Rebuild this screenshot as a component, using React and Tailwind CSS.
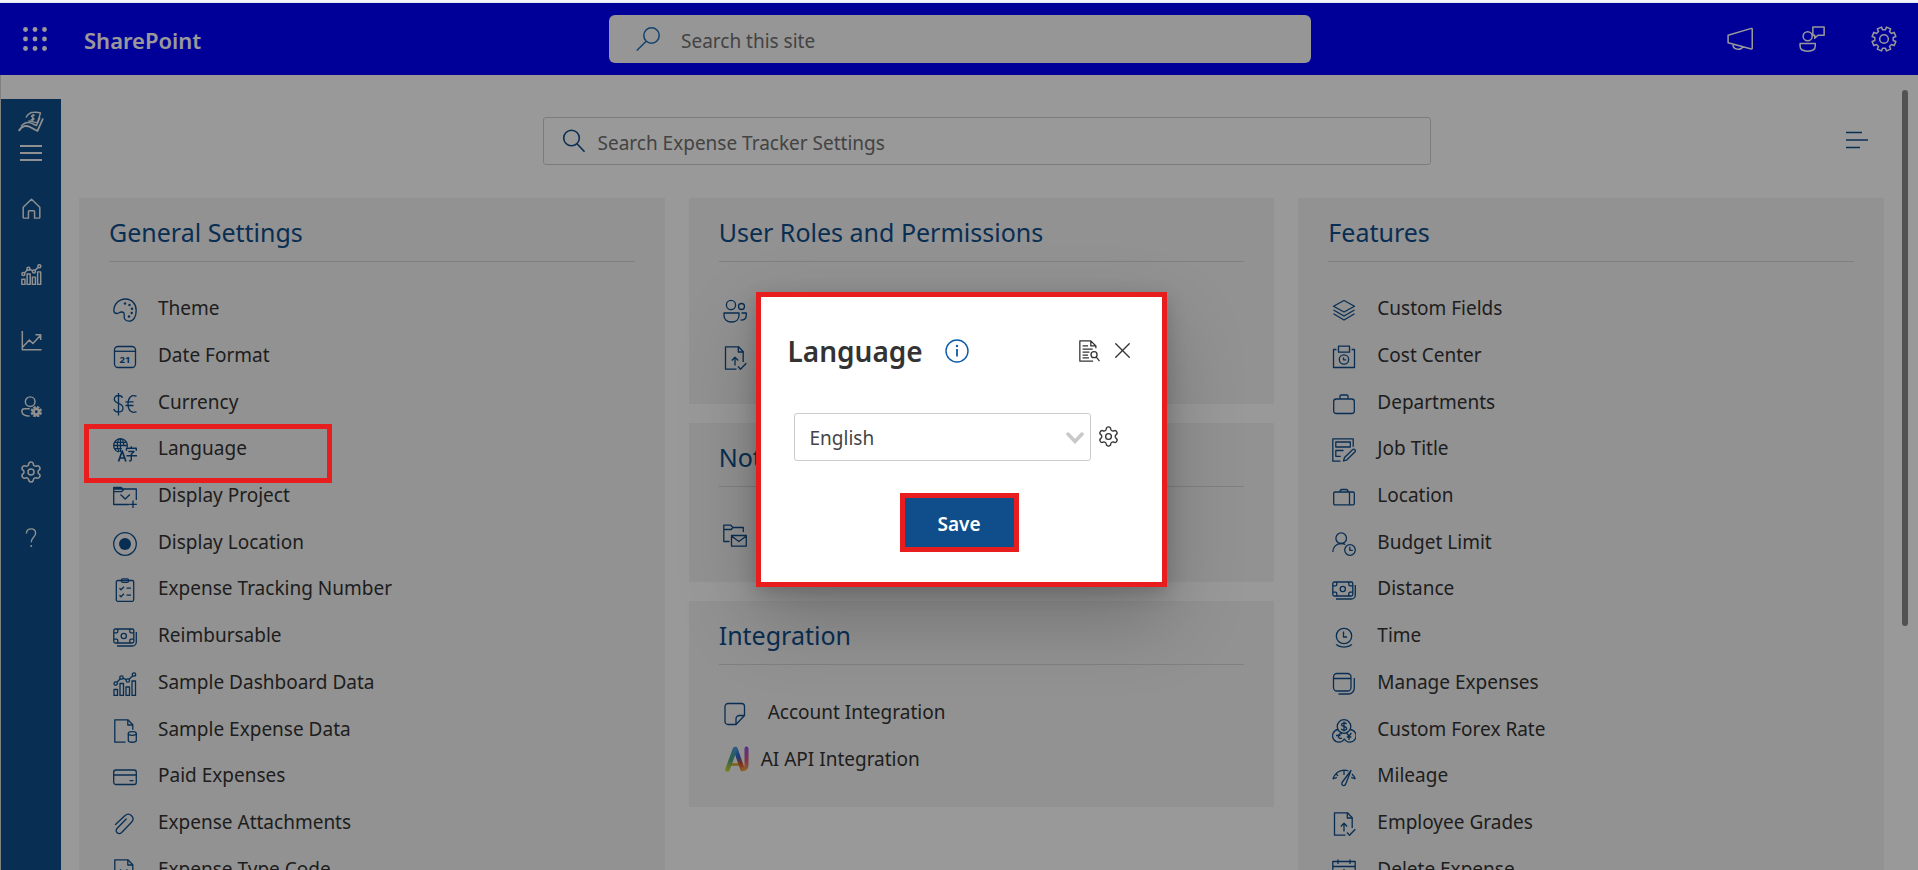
import React from "react";
import { Settings, X } from "lucide-react";

const Icon = ({ children, size = 24, className = "", sw = 1.3, box = "0 0 24 24" }) => (
  <svg
    width={size}
    height={size}
    viewBox={box}
    fill="none"
    stroke="currentColor"
    strokeWidth={sw}
    strokeLinejoin="round"
    aria-hidden="true"
    className={"shrink-0 " + className}
  >
    {children}
  </svg>
);

function gearPath(teeth, outer, inner) {
  const pts = [];
  const step = (Math.PI * 2) / teeth;
  for (let i = 0; i < teeth; i++) {
    const c = i * step - Math.PI / 2 + step / 2;
    [
      [-0.3, inner],
      [-0.24, outer],
      [0.24, outer],
      [0.3, inner],
    ].forEach(([o, r]) => {
      const a = c + o * step;
      pts.push((12 + r * Math.cos(a)).toFixed(2) + " " + (12 + r * Math.sin(a)).toFixed(2));
    });
  }
  return "M" + pts.join("L") + "Z";
}
const GEAR_OUTLINE = gearPath(8, 11.2, 8.6);
const GEAR_BADGE = gearPath(8, 11.5, 8);

const BarTrend = (
  <>
    <path d="M1 17.5h3.5v6H1zM7 11.5h3.5v12H7zM13 15h3.5v8.500H13zM19 9h3.500v14.500H19z" />
    <circle cx="2.700" cy="11.500" r="1.700" />
    <circle cx="8.500" cy="5.500" r="1.700" />
    <circle cx="14.800" cy="8.500" r="1.700" />
    <circle cx="21" cy="2.500" r="1.700" />
    <path d="M4 10.200l3.300-3.500M10 6.200l3.200 1.500M16 7.300l3.800-3.600" />
  </>
);
const Cash = (
  <>
    <rect x="0.8" y="4" width="20" height="14" rx="1.5" />
    <circle cx="10.800" cy="11" r="2.600" />
    <path d="M4.800 4v2.500a1.300 1.300 0 0 1-1.300 1.300H.8M16.800 4v2.500a1.300 1.300 0 0 0 1.300 1.300h2.700M4.800 18v-2.500a1.300 1.300 0 0 0-1.300-1.300H.8M16.800 18v-2.500a1.300 1.300 0 0 1 1.300-1.300h2.700" />
    <path d="M23.300 7v10a4 4 0 0 1-4 4H4" />
  </>
);
const DocUp = (
  <>
    <path d="M13.500 23.200H2.500V.8h13l4.700 5V16" />
    <path d="M15.300.8V6h5" />
    <path d="M12 19.500v-8M8.800 14.500l3.200-3.200 3.200 3.200M15 20.500l2.500 2.700 5.800-6" />
  </>
);

const icons = {
  theme: (
    <>
      <path d="M.8 12.500C1 6 6 1 12.500 1 18.800 1 23.200 6 23.200 12.500c0 6-2.700 10.700-7 10.700-3.700 0-5.500-2.200-5-5.700.3-2.500-.7-3.700-3-3.500-1.700.2-2.500 1.500-4.200 1.500C1.800 15.500.8 14.500.8 12.500z" />
      <g fill="currentColor" stroke="none">
        <circle cx="12" cy="5.500" r="1.200" />
        <circle cx="16.500" cy="7" r="1.200" />
        <circle cx="19" cy="10.800" r="1.200" />
        <circle cx="18.700" cy="15" r="1.200" />
        <circle cx="16" cy="18.500" r="1.200" />
      </g>
    </>
  ),
  date: (
    <>
      <rect x="1.500" y="1.500" width="21" height="21" rx="3.500" />
      <path d="M1.500 6.300h21" />
      <text x="12" y="18" textAnchor="middle" fontSize="9.500" fontWeight="700" fill="currentColor" stroke="none">21</text>
    </>
  ),
  currency: (
    <>
      <path d="M9.500 5.800C9 4.300 7.500 3.500 5.500 3.500 3 3.500 1.300 5 1.300 7.300c0 5 8.700 3.200 8.700 8.700 0 2.500-1.900 4-4.500 4-2.500 0-4.200-1.200-4.700-3M5.500 1v22.500" />
      <path d="M23.500 4.300c-5-2-8.500 1.200-8.500 7.700s3.500 9.700 8.500 7.700M12.500 9.800h8M12.500 13.500h8" />
    </>
  ),
  language: (
    <>
      <path d="M14 9.500A6.800 6.800 0 1 0 5.500 14M7.500 14V.7M4.300 7.500c0-3.500 1.300-6.800 3.200-6.800s3.200 3.300 3.200 6.800M4.300 7.500c0 2.500.7 5 2 6.300M.7 7.500h13.600M1.800 4.300h11.400M1.800 10.700h7" />
      <path d="M5.500 23.500l3.700-10.500 3.700 10.500M6.800 20h5" strokeWidth="1.700" />
      <path d="M13.500 12.700v-2.500H23.300v2.500M18.300 8.300v2M15.300 13.500h5.700l-2.700 2.700v5.300c0 1-.5 1.500-2.300 1.300M13.500 17.800H24" strokeWidth="1.400" />
    </>
  ),
  project: (
    <>
      <path d="M16 19.500H.7V4h22.600v11M.7 6.700h8l2.300-2.700M.7 4V2.500h7.500L10 4" />
      <path d="M7.500 9.500l4.700 4.500 4.700-4.500M20 15.500v7.500M16.300 19.300h7.500" />
    </>
  ),
  radio: (
    <>
      <circle cx="12" cy="12" r="11.300" />
      <circle cx="12" cy="12" r="6" fill="currentColor" stroke="none" />
    </>
  ),
  clipboard: (
    <>
      <rect x="3.300" y="2.500" width="17.400" height="20.800" rx="1.500" />
      <rect x="8.300" y=".8" width="7.400" height="3.500" rx="1.500" />
      <path d="M6.500 10.200l1.500 1.500 3-3M13.500 10.200h4.500M6.500 17.200l1.500 1.500 3-3M13.500 17.200h4.500" />
    </>
  ),
  cash: Cash,
  bars: BarTrend,
  docData: (
    <>
      <path d="M12.500 23.200H1.800V.8h13l5 5v5" />
      <path d="M14.800.8V6h5" />
      <path d="M15.300 14.500v6.700c0 2.700 8 2.700 8 0v-6.700" />
      <ellipse cx="19.300" cy="14.500" rx="4" ry="1.800" />
    </>
  ),
  card: (
    <>
      <rect x=".7" y="5" width="22.600" height="14.500" rx="2.200" />
      <path d="M.7 10h22.600M16.500 15.700h4" />
    </>
  ),
  clip: (
    <path d="M2.500 12.500L11.800 3.800c4.700-4.200 11 1.700 6.700 6.500L8.700 20.500c-3.200 3-7.500-1-4.500-4.200l9-9.300" strokeLinecap="round" />
  ),
  docCode: (
    <>
      <path d="M1.800 23.200V.8h13l5 5v17.400z" />
      <path d="M14.800.8V6h5M8 10.500l-3 3 3 3M13.500 10.500l3 3-3 3" />
    </>
  ),
  people: (
    <>
      <circle cx="8" cy="6" r="4.600" />
      <circle cx="18.500" cy="7.500" r="3" />
      <path d="M1 14h15v2.500c0 4-3 6.500-7.500 6.500S1 20.500 1 16.500zM18.500 14H23.300v2c0 3.300-2.300 5.200-5.800 5.200" />
    </>
  ),
  docUp: DocUp,
  folderMail: (
    <>
      <path d="M6.500 17.500H.8V1.200h7l2 2.300h10.500V8M.8 5.500h7.500l1.500-2" />
      <path d="M8.500 11.500h14.800v10.700H8.500zM8.500 12l7.400 5.500 7.400-5.500" />
    </>
  ),
  note: (
    <path d="M13 22.500H5a3 3 0 0 1-3-3V4.500a3 3 0 0 1 3-3h13.500a3 3 0 0 1 3 3V13.500zM13 22.500v-5.500a3.500 3.500 0 0 1 3.500-3.500h5" />
  ),
  layers: (
    <path d="M12 2.500l10.500 5.700L12 14 1.500 8.200zM1.500 12l10.500 6 10.500-6M1.500 15.800l10.500 6.200 10.500-6.200" />
  ),
  cost: (
    <>
      <path d="M4.500 4.500h-3v18h21v-18h-3" />
      <path d="M6.500 1.200h11v6h-11z" />
      <circle cx="12" cy="14.500" r="4.700" />
      <path d="M11.500 12.500v2.300h2.700" />
    </>
  ),
  briefcase: (
    <>
      <rect x="1.700" y="7" width="20.600" height="14.500" rx="2.500" />
      <path d="M8 7V4a1 1 0 0 1 1-1h6a1 1 0 0 1 1 1v3" />
    </>
  ),
  job: (
    <>
      <path d="M8.500 23.200H.8V.8h20.400v8" />
      <path d="M3.800 4h14.500v5H3.800zM11.500 12.500H3.800v5.800h5M12.500 19.500l8.300-8c1.300-1 3.400.8 2.300 2.300l-8.200 8-3.400 1.200z" />
    </>
  ),
  suitcase: (
    <>
      <rect x="1.700" y="7" width="20.600" height="12.800" rx="1.200" />
      <path d="M8 7c0-1.700.8-2.500 2-2.500h4c1.200 0 2 .8 2 2.500M17.500 7v12.800" />
    </>
  ),
  personClock: (
    <>
      <circle cx="9.200" cy="6.200" r="5.300" />
      <path d="M.8 20c0-5 3.500-8.500 8.500-8.500 1.500 0 3 .4 4 1" />
      <circle cx="18" cy="18" r="5.300" />
      <path d="M17.800 14.800v3.500h3" />
    </>
  ),
  clock: (
    <>
      <circle cx="12" cy="11" r="7.700" />
      <path d="M11.500 6.500V12h3.500M4 19.500c4.500 3.500 11.500 3.500 16 0" />
    </>
  ),
  windows: (
    <>
      <rect x="1.500" y="1.500" width="17.500" height="17.500" rx="3.500" />
      <path d="M1.500 6.500H19M22.300 6v10a6 6 0 0 1-6 6H6.500" />
    </>
  ),
  forex: (
    <>
      <circle cx="12" cy="7.500" r="6.800" />
      <path d="M6.500 10.500A6.300 6.300 0 1 0 12.300 20a6.300 6.300 0 1 0 5.500-9.500" />
      <path d="M14.500 5c-1-1.500-5-1.300-5 .7 0 2.300 5.200 1.200 5.200 3.800 0 2-4.200 2.300-5.500.5M12 2.500v10" />
      <path d="M10 14.800c-4-1.500-5.500 5.700 0 4.500M4 16.500h4.500M14.500 14l2.500 3 2.500-3M17 17v4M14.700 18h4.600" />
    </>
  ),
  gauge: (
    <>
      <path d="M.8 14C3 8.500 7 5.500 12 5.200c1.700 0 3 .2 4.500.8M20 9c1.500 1.500 2.500 3 3.300 5M12 5.200V10M.8 14l4-1.700M23.300 14l-4-1.700M4 8.700l2 2.200" />
      <path d="M19 5.500L10 17.500c-1 2 1.700 4.500 3.500 2z" />
    </>
  ),
  calendar: <path d="M.8 2.500h22.400v20.700H.8zM.8 7.500h22.400M6 .5V5M18 .5V5M12 10v5" />,
};

const AiLogo = () => (
  <svg width="26" height="26" viewBox="0 0 26 26" fill="none" strokeWidth="4.500" strokeLinecap="round" strokeLinejoin="round" className="shrink-0" aria-hidden="true">
    <defs>
      <linearGradient id="ai-a" gradientUnits="userSpaceOnUse" x1="10" y1="2" x2="3" y2="24">
        <stop offset="0" stopColor="#4a98dc" />
        <stop offset=".5" stopColor="#4aa080" />
        <stop offset="1" stopColor="#c8d030" />
      </linearGradient>
      <linearGradient id="ai-b" gradientUnits="userSpaceOnUse" x1="12" y1="2" x2="20" y2="24">
        <stop offset="0" stopColor="#4a98dc" />
        <stop offset=".4" stopColor="#2f62c8" />
        <stop offset=".7" stopColor="#d0502a" />
        <stop offset="1" stopColor="#f08a40" />
      </linearGradient>
      <linearGradient id="ai-c" gradientUnits="userSpaceOnUse" x1="23" y1="2" x2="23" y2="24">
        <stop offset="0" stopColor="#9a50d8" />
        <stop offset=".5" stopColor="#d0508a" />
        <stop offset="1" stopColor="#f0a040" />
      </linearGradient>
    </defs>
    <path d="M6 18.500h9" stroke="#c9a828" strokeWidth="2.500" />
    <path d="M12.500 3L19.500 23" stroke="url(#ai-b)" />
    <path d="M23.500 2.500v17c0 2-1.500 3.500-3 3.500" stroke="url(#ai-c)" strokeWidth="4" />
    <path d="M12 3L4.500 23.500" stroke="url(#ai-a)" />
  </svg>
);

const general = [
  ["theme", "Theme"],
  ["date", "Date Format"],
  ["currency", "Currency"],
  ["language", "Language"],
  ["project", "Display Project"],
  ["radio", "Display Location"],
  ["clipboard", "Expense Tracking Number"],
  ["cash", "Reimbursable"],
  ["bars", "Sample Dashboard Data"],
  ["docData", "Sample Expense Data"],
  ["card", "Paid Expenses"],
  ["clip", "Expense Attachments"],
  ["docCode", "Expense Type Code"],
];
const features = [
  ["layers", "Custom Fields"],
  ["cost", "Cost Center"],
  ["briefcase", "Departments"],
  ["job", "Job Title"],
  ["suitcase", "Location"],
  ["personClock", "Budget Limit"],
  ["cash", "Distance"],
  ["clock", "Time"],
  ["windows", "Manage Expenses"],
  ["forex", "Custom Forex Rate"],
  ["gauge", "Mileage"],
  ["docUp", "Employee Grades"],
  ["calendar", "Delete Expense"],
];

function Card({ title, items, tall }) {
  return (
    <section className="bg-[#f3f3f3] px-[30px] pb-[25px]">
      <h2 className="flex h-[64px] items-center border-b border-[#d6d6d6] pt-[6px] text-[25px] text-[#0f4e8a]">{title}</h2>
      <ul className={"mt-[23px] grid auto-rows-fr " + (tall ? "min-h-[607px]" : "")}>
        {items.map(([icon, label]) => (
          <li key={label} className={"relative flex items-center " + (tall ? "" : "h-[47px]")}>
            <a href="#" className={"flex items-center pl-1 text-[19px] leading-7 text-[#333333] " + (icon === "ai" ? "gap-3" : "gap-[21px]")}>
              {icon === "ai" ? (
                <AiLogo />
              ) : (
                <span className="pt-1 text-[#0f4e8a]">
                  <Icon>{icons[icon]}</Icon>
                </span>
              )}
              {label}
            </a>
            {icon === "language" && (
              <span className="pointer-events-none absolute -left-[25px] -top-px z-50 h-[59px] w-[248px] border-[5px] border-[#e71d1e]" />
            )}
          </li>
        ))}
      </ul>
    </section>
  );
}

const sideNav = [
  ["Home", <path d="M2.500 10.500L12 1.500l9.500 9V22a1 1 0 0 1-1 1h-5v-7.500a1 1 0 0 0-1-1h-5a1 1 0 0 0-1 1V23h-5a1 1 0 0 1-1-1z" />],
  ["Dashboard", BarTrend],
  ["Reports", <path d="M1.500 1v21.500H23.500M1.500 20l8-8.500 4 4L22.500 6M16.500 5.500h6v6" />],
  [
    "User settings",
    <>
      <circle cx="10.500" cy="6.500" r="5.500" />
      <path d="M10 23c-5.500 0-9-2.200-9-5.500C1 15.500 2 14.500 4 14.500h6" />
      <g transform="translate(11 11.500) scale(.54)">
        <path d={GEAR_BADGE} fill="currentColor" />
        <circle cx="12" cy="12" r="3" fill="#0f4e8a" stroke="none" />
      </g>
    </>,
  ],
  ["Settings", null],
  [
    "Help",
    <>
      <path d="M6.500 6.500c0-3.500 2.300-5.500 5.500-5.500s5.500 2 5.500 5.200c0 4.800-5.300 5-5.300 10.800" />
      <circle cx="12.200" cy="21.700" r="1.200" fill="currentColor" stroke="none" />
    </>,
  ],
];

export default function App() {
  return (
    <div className="relative flex h-screen flex-col overflow-hidden bg-white font-['Noto_Sans','Open_Sans',sans-serif]">
      <div className="h-[3px] shrink-0 border-b border-[#dfe6f5] bg-[#f2f4fa]" />
      <header className="flex h-[72px] shrink-0 items-center bg-[#0000ff] pl-[23px] pr-[21px] text-white">
        <div className="flex flex-1 items-center gap-[37px]">
          <button aria-label="App launcher">
            <svg width="24" height="24" viewBox="0 0 24 24" fill="currentColor" aria-hidden="true">
              {[2.5, 12, 21.5].map((y) => [2.5, 12, 21.5].map((x) => <circle key={x + "-" + y} cx={x} cy={y} r="2.400" />))}
            </svg>
          </button>
          <span className="pt-[2px] text-[22px] font-semibold">SharePoint</span>
        </div>
        <label className="flex h-12 w-full max-w-[702px] items-center gap-[21px] rounded-md bg-[#fafafa] pl-[27px] text-[#1e6fb8]">
          <Icon sw={1.5}>
            <circle cx="15.500" cy="8.500" r="7.700" />
            <path d="M10.200 14.200L.8 23.500" />
          </Icon>
          <input aria-label="Search this site" placeholder="Search this site" className="h-full w-full bg-transparent pt-[3px] text-[19px] text-[#333333] outline-none placeholder:text-[#707070]" />
        </label>
        <div className="flex flex-1 items-center justify-end gap-[46px]">
          <button aria-label="Announcements">
            <Icon size={26} sw={1.4}>
              <path d="M1 8.500L22.500 2.200a.8.800 0 0 1 .8.800v17.500a.8.800 0 0 1-.8.800L1 15.500zM5.500 16.800c-.5 5.500 8.500 6 9 2" />
            </Icon>
          </button>
          <button aria-label="Feedback">
            <Icon size={26} sw={1.4}>
              <circle cx="8" cy="9.500" r="4.200" />
              <path d="M1 16.200h14v2.300c0 3-2.500 4.700-7 4.700s-7-1.700-7-4.700zM12.800 1h10.400v7.500h-5.700l-3 2.700V8.500h-1.700z" />
            </Icon>
          </button>
          <button aria-label="Settings">
            <Icon size={26} sw={1.4}>
              <path d={GEAR_OUTLINE} />
              <circle cx="12" cy="12" r="4" />
            </Icon>
          </button>
        </div>
      </header>

      <div className="flex min-h-0 flex-1 border-l border-[#d8d8d8]">
        <nav className="mt-6 flex w-[60px] shrink-0 flex-col items-center bg-[#0f4e8a] pt-3 text-[#f0f0f0]">
          <Icon size={26} sw={1.4} box="0 0 26 26">
            <path d="M8 6.500C10 2.500 13 1.300 16 1.300c2.500-.3 4.500 0 6.500.7L19.500 11.500c-3 .5-5.500-1.700-9-1.500" />
            <path d="M3 15.500c4-5 8.500-4.500 12-2.500l3.500 1.500L22 6.500" />
            <path d="M.8 20c3.200-5.700 8-6 12.200-3.500 2.500 1.500 4.500 2.700 6.500 3.300L25 7.500" strokeWidth="1.800" />
            <path d="M16.800 4.500c-1.500-1-3.300-.5-3.300.8s2.700 1.300 2.500 2.700c-.3 1.300-2.300 1.300-3.300.5M15.300 3l-1.200 7" strokeWidth="1.200" />
          </Icon>
          <button aria-label="Toggle menu" className="mt-[6px] flex h-[20px] items-center">
            <Icon size={22} sw={2} box="0 0 22 22">
              <path d="M0 4h22M0 11h22M0 18h22" />
            </Icon>
          </button>
          <div className="mt-3 flex flex-col">
            {sideNav.map(([label, art]) => (
              <a key={label} href="#" aria-label={label} className="flex h-[66px] w-[60px] items-center justify-center">
                {art ? <Icon size={label === "Help" ? 20 : 21} sw={1.7}>{art}</Icon> : <Settings size={24} strokeWidth={1.5} />}
              </a>
            ))}
          </div>
        </nav>

        <main className="relative min-w-0 flex-1 overflow-hidden">
          <div className="flex items-center pl-5 pr-[26px] pt-[42px]">
            <div className="flex-1" />
            <label className="flex h-12 w-full max-w-[888px] items-center gap-3 rounded-[3px] border border-[#cfcfcf] pl-[18px] text-[#0f4e8a]">
              <Icon sw={1.6}>
                <circle cx="9.500" cy="9" r="7.800" />
                <path d="M15 14.800l7.500 8" />
              </Icon>
              <input aria-label="Search Expense Tracker Settings" placeholder="Search Expense Tracker Settings" className="h-full w-full bg-transparent pt-[3px] text-[19px] text-[#333333] outline-none placeholder:text-[#707070]" />
            </label>
            <div className="flex flex-1 justify-end">
              <button aria-label="Filter" className="mr-6 text-[#0f4e8a]">
                <Icon size={22} sw={1.5} box="0 0 22 22">
                  <path d="M0 2.500h16M0 10h22M0 17.500h14" />
                </Icon>
              </button>
            </div>
          </div>
          <div className="mt-[33px] grid grid-cols-3 items-start gap-6 pl-[18px] pr-[34px]">
            <Card title="General Settings" items={general} tall />
            <div className="flex flex-col gap-[19px]">
              <Card title="User Roles and Permissions" items={[["people", "Roles"], ["docUp", "Approvals"]]} />
              <Card title="Notifications" items={[["folderMail", "Emails"]]} />
              <Card title="Integration" items={[["note", "Account Integration"], ["ai", "AI API Integration"]]} />
            </div>
            <Card title="Features" items={features} tall />
          </div>
          <div className="absolute right-[10px] top-[15px] h-[536px] w-[6px] rounded-full bg-[#898989]" />
        </main>
      </div>

      <div className="absolute inset-x-0 bottom-0 top-[3px] z-40 flex items-center justify-center bg-black/40 pl-1 pt-[5px]">
        <div
          role="dialog"
          aria-labelledby="dialog-title"
          className="w-[411px] border-[5px] border-[#e71d1e] bg-white pb-[30px] pt-8 shadow-[0_32px_72px_rgba(0,0,0,0.22),0_6px_18px_rgba(0,0,0,0.18)]"
        >
          <div className="flex h-[44px] items-center pl-[27px] pr-[26px] text-[#333333]">
            <h2 id="dialog-title" className="text-[28px] font-semibold">Language</h2>
            <button aria-label="Information" className="ml-[22px] text-[#0f5aa6]">
              <Icon sw={1.4}>
                <circle cx="12" cy="12" r="11" />
                <path d="M12 10v7.500" strokeWidth="1.800" />
                <circle cx="12" cy="7" r="1.200" fill="currentColor" stroke="none" />
              </Icon>
            </button>
            <button aria-label="Audit log" className="ml-auto">
              <Icon size={22} sw={1.4}>
                <path d="M19.500 9V6.500L14 1H2v22h14.500M14 1v5.500h5.500M5 6.500h6M5 10h11M5 13.200h7.500M5 16.400h6M5 19.600h7" />
                <circle cx="17.500" cy="16" r="3.300" />
                <path d="M19.800 18.500l3.700 4.500" />
              </Icon>
            </button>
            <button aria-label="Close" className="ml-[9px]">
              <X size={27} strokeWidth={1.2} />
            </button>
          </div>
          <div className="mt-[40px] flex items-center gap-[6px] pl-[33px]">
            <div className="relative w-[297px]">
              <select aria-label="Language" className="h-12 w-full appearance-none rounded-[3px] border border-[#cccccc] bg-white pl-[15px] pt-[3px] text-[19px] text-[#444444]">
                <option>English</option>
              </select>
              <svg width="18" height="12" viewBox="0 0 18 12" fill="none" stroke="#c8c8c8" strokeWidth="3.500" strokeLinecap="round" className="pointer-events-none absolute right-[7px] top-[19px]" aria-hidden="true">
                <path d="M2 2l7 7.500L16 2" />
              </svg>
            </div>
            <button aria-label="Language settings" className="text-[#333333]">
              <Settings size={23} strokeWidth={1.4} />
            </button>
          </div>
          <div className="mt-8 flex justify-center pr-1">
            <button className="h-[59px] w-[119px] border-[5px] border-[#e71d1e] bg-[#0f4e8a] pt-[5px] text-[19px] font-semibold text-white">Save</button>
          </div>
        </div>
      </div>
    </div>
  );
}
